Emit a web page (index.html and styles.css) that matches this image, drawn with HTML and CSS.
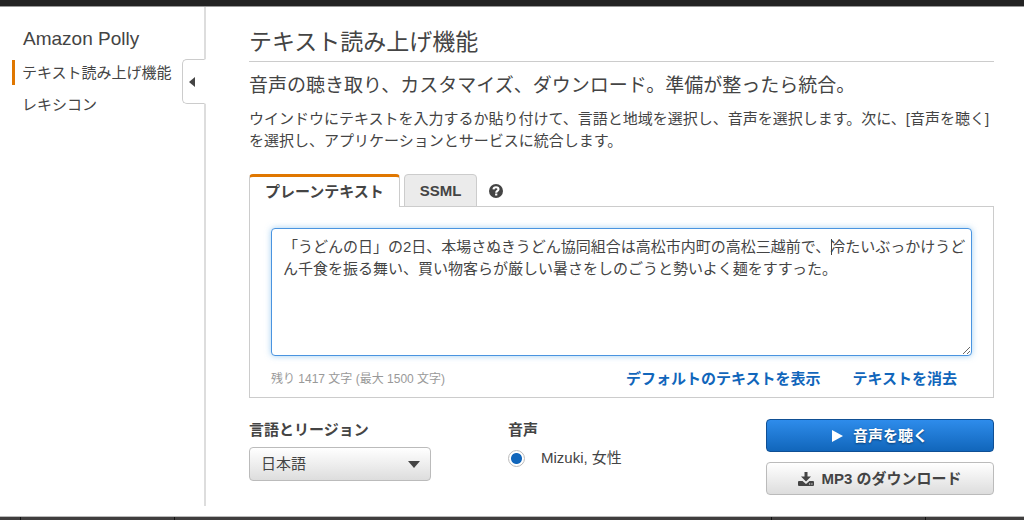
FILE: index.html
```html
<!DOCTYPE html>
<html lang="ja">
<head>
<meta charset="utf-8">
<meta name="viewport" content="width=device-width, initial-scale=1">
<title>Amazon Polly</title>
<link rel="stylesheet" href="styles.css">
</head>
<body>
<header class="topbar"></header>
<div class="layout">
  <nav class="sidebar">
    <h2 class="service-name">Amazon Polly</h2>
    <a class="nav-link nav-link-active" href="#speech">テキスト読み上げ機能</a>
    <a class="nav-link" href="#lexicons">レキシコン</a>
    <button class="collapse" type="button" aria-label="メニューを閉じる">
      <svg width="6" height="10" viewBox="0 0 6 10"><path d="M6 0v10L0 5z" fill="#444"/></svg>
    </button>
  </nav>
  <main class="main">
    <h1 class="title">テキスト読み上げ機能</h1>
    <p class="lead">音声の聴き取り、カスタマイズ、ダウンロード。準備が整ったら統合。</p>
    <p class="description">ウインドウにテキストを入力するか貼り付けて、言語と地域を選択し、音声を選択します。次に、[音声を聴く] を選択し、アプリケーションとサービスに統合します。</p>

    <div class="tabs" role="tablist">
      <button class="tab tab-active" type="button" role="tab" aria-selected="true">プレーンテキスト</button>
      <button class="tab" type="button" role="tab" aria-selected="false">SSML</button>
      <button class="help" type="button" aria-label="ヘルプ">
        <svg width="14" height="14" viewBox="0 0 14 14"><circle cx="7" cy="7" r="7" fill="#444"/><path d="M4.500 5.400C4.600 3.900 5.700 3.200 7 3.200c1.500 0 2.500.8 2.500 2 0 1.700-2.300 1.700-2.300 3.500" fill="none" stroke="#fff" stroke-width="2.100"/><path d="M6.100 9.500h2.200v2H6.100z" fill="#fff"/></svg>
      </button>
    </div>
    <section class="panel">
      <div class="editor">
        <textarea class="text" aria-label="テキスト" spellcheck="false">「うどんの日」の2日、本場さぬきうどん協同組合は高松市内町の高松三越前で、冷たいぶっかけうどん千食を振る舞い、買い物客らが厳しい暑さをしのごうと勢いよく麺をすすった。</textarea>
        <span class="caret"></span>
      </div>
      <div class="panel-foot">
        <span class="count">残り 1417 文字 (最大 1500 文字)</span>
        <a class="action" href="#default">デフォルトのテキストを表示</a>
        <a class="action" href="#clear">テキストを消去</a>
      </div>
    </section>

    <div class="options">
      <div class="language">
        <label class="label" for="language">言語とリージョン</label>
        <div class="select-wrap">
          <select class="select" id="language"><option>日本語</option></select>
          <svg class="select-arrow" width="12" height="7" viewBox="0 0 12 7"><path d="M0 0h12L6 7z" fill="#444"/></svg>
        </div>
      </div>
      <div class="voice" role="radiogroup" aria-labelledby="voice-label">
        <span class="label" id="voice-label">音声</span>
        <label class="voice-option"><input class="radio" type="radio" name="voice" checked>Mizuki, 女性</label>
      </div>
      <div class="buttons">
        <button class="button button-primary" type="button">
          <svg width="11" height="12" viewBox="0 0 11 12"><path d="M0 0l11 6-11 6z" fill="#fff"/></svg>
          <span>音声を聴く</span>
        </button>
        <button class="button button-download" type="button">
          <svg width="16" height="14" viewBox="0 0 16 14"><path d="M6.500 0h3v4.500H13L8 9.500 3 4.500h3.500z" fill="#444"/><path d="M1 9h3.500L8 12l3.500-3H15q1 0 1 1v3q0 1-1 1H1q-1 0-1-1v-3q0-1 1-1z" fill="#444"/><path d="M11 11.500h1.200v1H11zM13.300 11.500h1.200v1h-1.200z" fill="#eee"/></svg>
          <span>MP3 のダウンロード</span>
        </button>
      </div>
    </div>
  </main>
</div>
<footer class="footer"><span class="foot-start"></span><span class="foot-item"></span><span class="foot-space"></span><span class="foot-item"></span><span class="foot-end"></span></footer>
</body>
</html>
```
FILE: styles.css
```css
* {
  box-sizing: border-box;
}

body {
  margin: 0;
  min-height: 100vh;
  display: flex;
  flex-direction: column;
  background: #fff;
  color: #444;
  font-family: "Liberation Sans", "Noto Sans CJK JP", sans-serif;
  font-size: 15px;
  line-height: 22px;
}

button, select, textarea {
  font: inherit;
  color: inherit;
}

.topbar {
  height: 7px;
  background: #232323;
  border-bottom: 1px solid #999;
}

.layout {
  flex: 1;
  display: flex;
}

.sidebar {
  position: relative;
  flex: 0 0 206px;
  margin-bottom: 10px;
  padding: 20px 0 0 12px;
  border-right: 2px solid #ddd;
}

.service-name {
  margin: 0 0 9px 11px;
  font-size: 19px;
  font-weight: 400;
  line-height: 24px;
}

.nav-link {
  display: block;
  margin-bottom: 7px;
  padding-left: 7px;
  border-left: 3px solid transparent;
  color: #444;
  line-height: 25px;
  text-decoration: none;
  white-space: nowrap;
}

.nav-link-active {
  border-left-color: #e07700;
}

.collapse {
  position: absolute;
  top: 52px;
  right: -2px;
  width: 24px;
  height: 45px;
  padding: 0 4px 0 0;
  border: 1px solid #ccc;
  border-right: 2px solid #fff;
  border-radius: 5px 0 0 5px;
  background: #fff;
}

.collapse svg {
  display: block;
  margin: 0 auto;
}

.main {
  flex: 1;
  min-width: 0;
  padding: 19px 30px 20px 43px;
}

.title {
  margin: 0 0 10px;
  padding-bottom: 3px;
  border-bottom: 1px solid #ccc;
  font-size: 23px;
  font-weight: 400;
  line-height: 32px;
}

.lead {
  margin: 0 0 8px;
  font-size: 19px;
  line-height: 28px;
}

.description {
  margin: 0 0 22px;
}

.tabs {
  display: flex;
  gap: 4px;
  margin-bottom: -1px;
}

.tab {
  height: 33px;
  padding: 0 15px;
  border: 1px solid #ccc;
  border-radius: 4px 4px 0 0;
  background: #ebebeb;
  font-weight: 700;
}

.tab-active {
  position: relative;
  border-top: 3px solid #e07700;
  border-bottom: 0;
  background: #fff;
}

.help {
  display: flex;
  align-items: center;
  padding: 0 8px;
  border: 0;
  background: none;
}

.panel {
  padding: 21px;
  padding-bottom: 7px;
  border: 1px solid #ccc;
}

.editor {
  position: relative;
}

.text {
  display: block;
  width: 100%;
  height: 128px;
  padding: 7px 2px 7px 11px;
  border: 1px solid #4a94e0;
  border-radius: 4px;
  outline: 0;
  background: #fff;
  box-shadow: 0 0 6px #66afe999;
}

.caret {
  position: absolute;
  top: 11px;
  left: 560px;
  width: 1px;
  height: 16px;
  background: #444;
}

.panel-foot {
  display: flex;
  align-items: center;
  gap: 32px;
  padding: 12px 15px 0 0;
}

.count {
  flex: 1;
  color: #999;
  font-size: 12px;
}

.action {
  color: #1166bb;
  font-weight: 700;
  text-decoration: none;
}

.options {
  display: flex;
  margin-top: 21px;
}

.language {
  flex: 0 0 259px;
}

.label {
  display: block;
  font-weight: 700;
}

.select-wrap {
  position: relative;
  width: 182px;
  margin-top: 6px;
}

.select {
  display: block;
  width: 100%;
  height: 34px;
  padding: 0 11px;
  appearance: none;
  border: 1px solid #bbb;
  border-radius: 4px;
  background: linear-gradient(#fff, #ddd);
}

.select-arrow {
  position: absolute;
  top: 14px;
  right: 11px;
  pointer-events: none;
}

.voice {
  flex: 1;
}

.voice-option {
  display: flex;
  align-items: center;
  gap: 16px;
  margin-top: 6px;
}

.radio {
  width: 17px;
  height: 17px;
  margin: 0;
  appearance: none;
  border: 1px solid #bbb;
  border-radius: 50%;
  background: radial-gradient(circle, #1166bb 5px, #fff 6px);
}

.buttons {
  flex: 0 0 228px;
  display: flex;
  flex-direction: column;
  gap: 10px;
}

.button {
  height: 33px;
  display: flex;
  align-items: center;
  justify-content: center;
  border-radius: 4px;
  font-weight: 700;
}

.button-primary {
  gap: 10px;
  border: 1px solid #0f4f94;
  background: linear-gradient(#2e8ceb, #1166bb);
  color: #fff;
  text-shadow: 0 1px 2px #0a3c70;
}

.button-download {
  gap: 7px;
  border: 1px solid #bbb;
  background: linear-gradient(#fff, #ddd);
}

.footer {
  height: 4px;
  display: flex;
  border-top: 1px solid #bbb;
  background: #403e3e;
}

.footer span {
  border-right: 1px solid #111;
}

.foot-start {
  width: 21px;
}

.foot-item {
  width: 154px;
}

.foot-space {
  flex: 1;
}

.footer .foot-end {
  width: 98px;
  border-right: 0;
}
```
